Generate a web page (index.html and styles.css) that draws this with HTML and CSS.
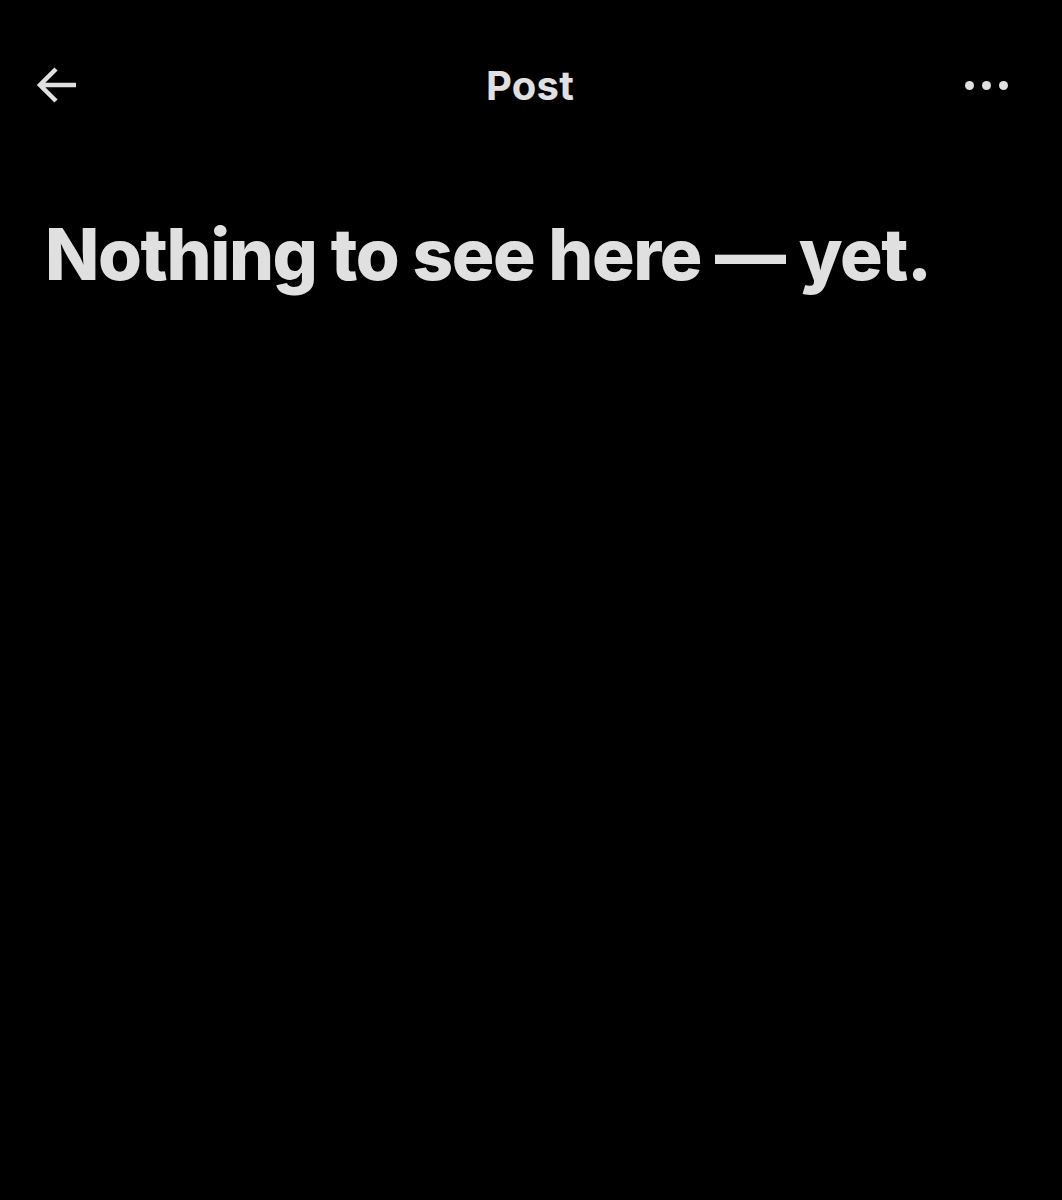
FILE: index.html
```html
<!DOCTYPE html>
<html lang="en">
<head>
    <meta charset="UTF-8">
    <meta name="viewport" content="width=device-width, initial-scale=1.0">
    <title>Post</title>
    <link rel="stylesheet" href="styles.css">
</head>
<body>
    <header class="topbar">
        <button class="icon-button back" aria-label="Back">
            <svg width="42" height="38" viewBox="0 0 42 38">
                <path d="M40 19H4M20 3L4 19l16 16" fill="none" stroke="#e0e0e0" stroke-width="4.5" stroke-linecap="butt" stroke-linejoin="miter"/>
            </svg>
        </button>
        <h1 class="title">Post</h1>
        <button class="icon-button more" aria-label="More">
            <span class="dot"></span><span class="dot"></span><span class="dot"></span>
        </button>
    </header>

    <main class="content">
        <h2 class="empty">Nothing to see here — yet.</h2>
    </main>
</body>
</html>
```

FILE: styles.css
```css
body {
    margin: 0;
    background-color: #000;
    color: #e0e0e0;
    font-family: Inter, "Open Sans", sans-serif;
    min-height: 1200px;
}

.topbar {
    display: grid;
    grid-template-columns: 1fr auto 1fr;
    align-items: center;
    height: 170px;
    padding: 0 54px 0 36px;
    box-sizing: border-box;
}

.icon-button {
    background: none;
    border: none;
    padding: 0;
    display: flex;
    align-items: center;
    cursor: pointer;
}

.back {
    justify-self: start;
}

.title {
    margin: 0 0 0 16px;
    font-size: 40px;
    font-weight: 700;
    letter-spacing: 0.2px;
}

.more {
    justify-self: end;
    gap: 8px;
}

.dot {
    width: 9px;
    height: 9px;
    border-radius: 50%;
    background-color: #e0e0e0;
}

.content {
    padding: 0 45px;
}

.empty {
    margin: 42px 0 0;
    font-size: 71px;
    font-weight: 800;
    letter-spacing: -1.4px;
    line-height: 1.2;
}
```
